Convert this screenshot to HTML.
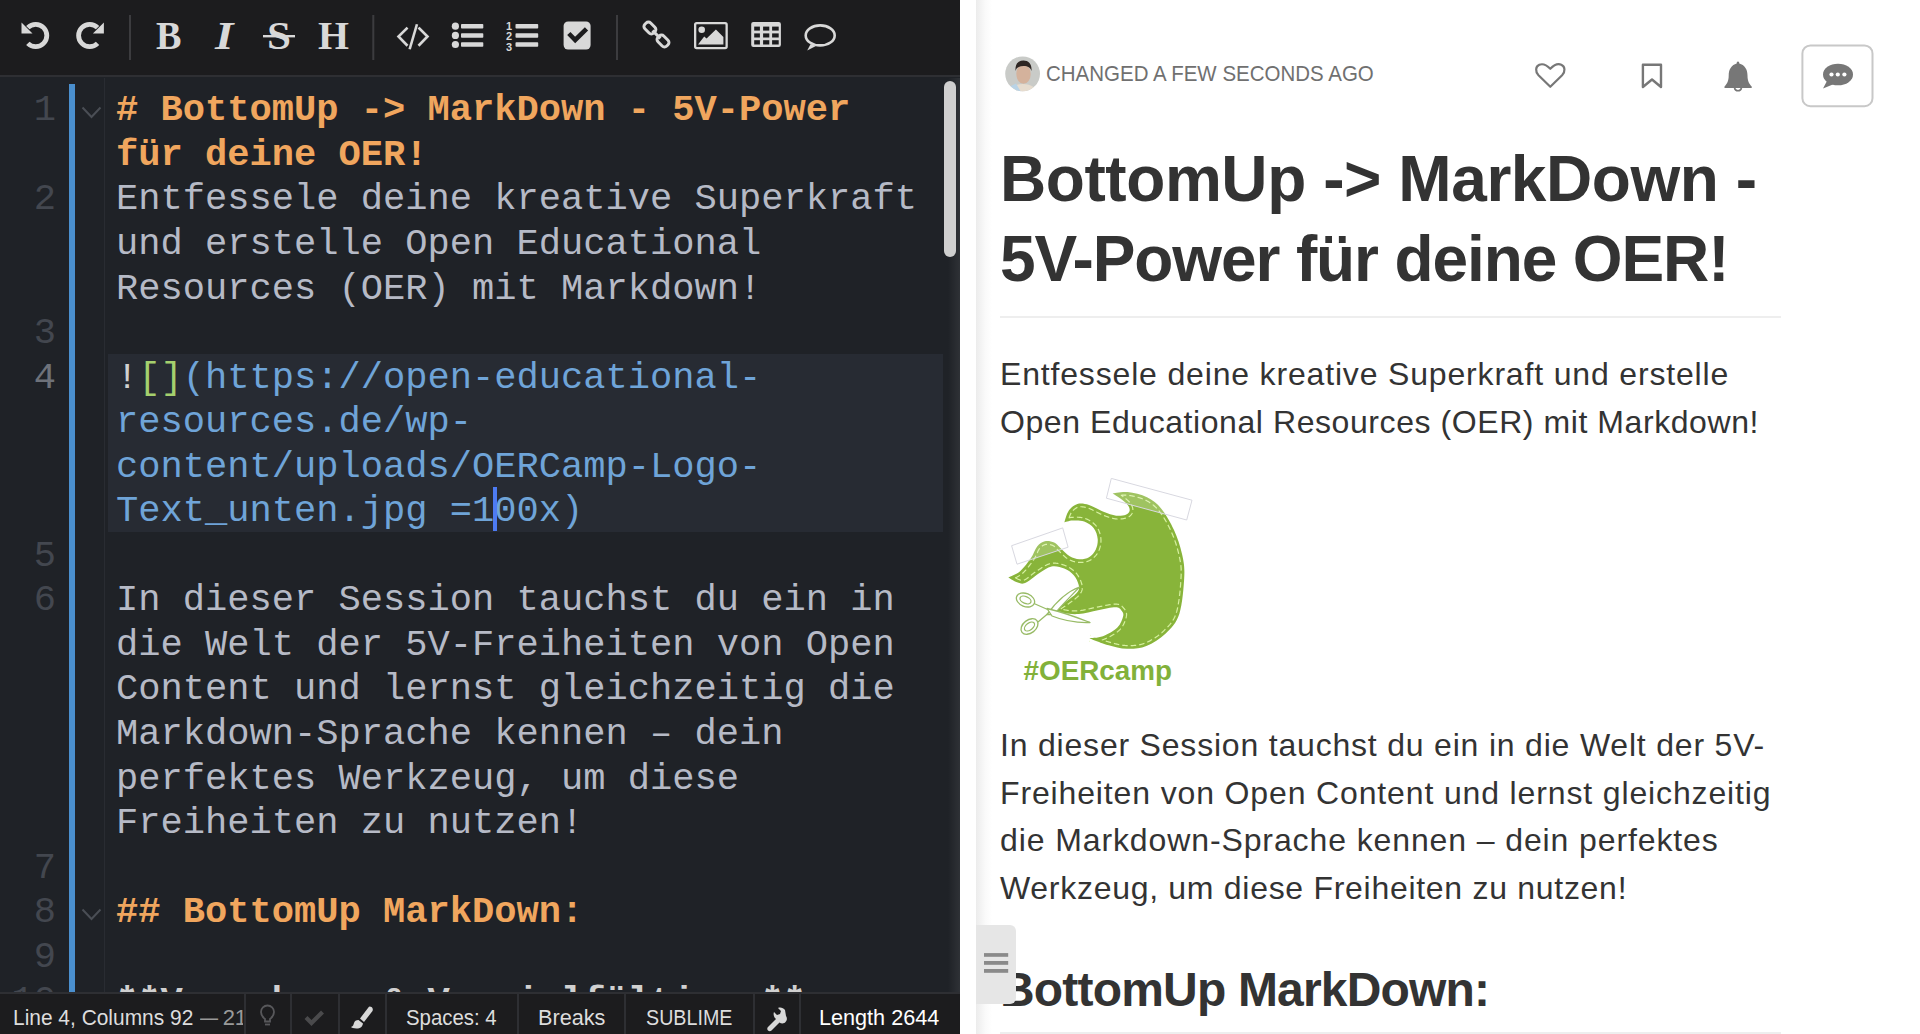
<!DOCTYPE html>
<html><head><meta charset="utf-8">
<style>
*{box-sizing:border-box;margin:0;padding:0}
html,body{width:1920px;height:1034px;overflow:hidden;background:#fff;font-family:"Liberation Sans",sans-serif}
#left{position:absolute;left:0;top:0;width:960px;height:1034px;background:#1f2227;overflow:hidden}
#redge{position:absolute;left:948px;top:78px;width:12px;height:914px;background:linear-gradient(to right,rgba(255,255,255,0),rgba(255,255,255,0.07))}
#toolbar{position:absolute;left:0;top:0;width:960px;height:77px;background:#1c1c1e;border-bottom:2px solid #2e2f33}
.ic{position:absolute}
.sep{position:absolute;top:15px;width:2px;height:45px;background:#3a3a3d}
#gutterline{position:absolute;left:104px;top:78px;width:1px;height:914px;background:#292c32}
#bluebar{position:absolute;left:69px;top:84px;width:6px;height:910px;background:#4a8fce}
.ln{position:absolute;left:0;padding-top:2px;width:56px;text-align:right;font-family:"Liberation Mono",monospace;font-size:37.1px;color:#43474f;line-height:44.55px;height:44.55px}
.row{position:absolute;left:116px;padding-top:2px;font-family:"Liberation Mono",monospace;font-size:37.1px;line-height:44.55px;height:44.55px;white-space:pre;color:#b6bac6}
.h{color:#f0a65e;font-weight:bold}
.u{color:#6fa4d8}
.g{color:#a5d06e}
.w{color:#d0d0d0}
#active{position:absolute;left:108px;top:353.60px;width:835px;height:178.20px;background:#272b33}
.fold{position:absolute;left:81px;width:22px;height:14px}
#cursor{position:absolute;left:493px;top:486.5px;width:3.5px;height:44px;background:#4d7bf3}
#scroll{position:absolute;left:944px;top:81px;width:12px;height:176px;background:#cfcfcf;border-radius:6px}
#status{position:absolute;left:0;top:992px;width:960px;height:42px;background:#1c1c1e;border-top:2px solid #2e2f33;font-family:"Liberation Sans",sans-serif;font-size:22px;color:#ddd}
.sdiv{position:absolute;top:0;width:2px;height:42px;background:#2e2f33}
.st{position:absolute;top:4px;line-height:40px;white-space:pre}
#right{position:absolute;left:960px;top:0;width:960px;height:1034px;background:#fff;overflow:hidden}
#shadow{position:absolute;left:16px;top:0;width:16px;height:1034px;background:linear-gradient(to right,#ececec,#fafafa 60%,#fff)}
.md{position:absolute;left:40px;color:#333;white-space:nowrap}
</style></head><body>
<div id="left">
  <div id="toolbar"></div>
  <svg id="tbsvg" width="960" height="76" style="position:absolute;left:0;top:0">
    <g fill="none" stroke="#d8d8d8" stroke-width="4.8">
      <path d="M27.85 27.65 A11.1 11.1 0 1 1 27.85 43.35"/>
      <path d="M97.55 27.65 A11.1 11.1 0 1 0 97.55 43.35"/>
    </g>
    <g fill="#d8d8d8">
      <polygon points="21.5,22.5 21.5,33.5 32.5,33.5"/>
      <polygon points="103.9,22.5 103.9,33.5 92.9,33.5"/>
    </g>
    <rect x="129" y="15" width="2" height="45" fill="#3c3c3f"/>
    <rect x="372.3" y="15" width="2" height="45" fill="#3c3c3f"/>
    <rect x="616" y="15" width="2" height="45" fill="#3c3c3f"/>
    <g fill="#d8d8d8" font-family="Liberation Serif" font-weight="bold">
      <text id="tB" x="156" y="49" font-size="41" textLength="25.5" lengthAdjust="spacingAndGlyphs">B</text>
      <text id="tI" x="215" y="49" font-size="41" font-style="italic" textLength="18.5" lengthAdjust="spacingAndGlyphs">I</text>
      <text id="tS" x="267" y="49" font-size="41" textLength="24" lengthAdjust="spacingAndGlyphs">S</text>
      <text id="tH" x="318" y="49" font-size="41" textLength="31" lengthAdjust="spacingAndGlyphs">H</text>
    </g>
    <rect x="263" y="35" width="32" height="2.4" fill="#d8d8d8"/>
    <g fill="none" stroke="#d8d8d8" stroke-width="2.6" stroke-linecap="square">
      <polyline points="406.6,28.5 398.5,36.5 406.6,44.8"/>
      <line x1="416.6" y1="25.5" x2="410" y2="48"/>
      <polyline points="419.4,28.5 427.5,36.5 419.4,44.8"/>
    </g>
    <g fill="#d8d8d8">
      <circle cx="455.4" cy="26.2" r="3.6"/><circle cx="455.4" cy="35.4" r="3.6"/><circle cx="455.4" cy="44.5" r="3.6"/>
      <rect x="461" y="24" width="22.3" height="4.5" rx="0.8"/><rect x="461" y="33.2" width="22.3" height="4.5" rx="0.8"/><rect x="461" y="42.3" width="22.3" height="4.5" rx="0.8"/>
      <rect x="515.5" y="24" width="22.7" height="4.5" rx="0.8"/><rect x="515.5" y="33.2" width="22.7" height="4.5" rx="0.8"/><rect x="515.5" y="42.3" width="22.7" height="4.5" rx="0.8"/>
    </g>
    <g fill="#d8d8d8" font-family="Liberation Sans" font-weight="bold" font-size="11">
      <text x="506" y="29.5">1</text><text x="506" y="40">2</text><text x="506" y="50.5">3</text>
    </g>
    <rect x="563.6" y="21.5" width="27" height="28" rx="4.5" fill="#d8d8d8"/>
    <polyline points="568.8,33.5 575.2,40 586.5,28.8" fill="none" stroke="#1c1c1e" stroke-width="4.6"/>
    <g fill="none" stroke="#d8d8d8" stroke-width="3">
      <rect x="-6.2" y="-4.1" width="12.4" height="8.2" rx="3.2" transform="translate(649.9,28) rotate(45)"/>
      <rect x="-6.2" y="-4.1" width="12.4" height="8.2" rx="3.2" transform="translate(663,41) rotate(45)"/>
      <line x1="652.5" y1="30.6" x2="660.4" y2="38.4"/>
    </g>
    <rect x="695.15" y="23.15" width="31.5" height="24.9" rx="1.5" fill="none" stroke="#d8d8d8" stroke-width="2.3"/>
    <circle cx="701.7" cy="29.7" r="3.3" fill="#d8d8d8"/>
    <polygon points="698,44.6 704.2,36.6 706.6,38.5 715.9,29.5 723.4,37 723.4,44.6" fill="#d8d8d8"/>
    <rect x="751.2" y="21.9" width="29.7" height="25" rx="2.2" fill="#d8d8d8"/>
    <g fill="#1c1c1e">
      <rect x="754.2" y="26.6" width="5.7" height="4"/><rect x="763.1" y="26.6" width="6.2" height="4"/><rect x="772.1" y="26.6" width="6.6" height="4"/>
      <rect x="754.2" y="33.4" width="5.7" height="4.1"/><rect x="763.1" y="33.4" width="6.2" height="4.1"/><rect x="772.1" y="33.4" width="6.6" height="4.1"/>
      <rect x="754.2" y="40.2" width="5.7" height="4.3"/><rect x="763.1" y="40.2" width="6.2" height="4.3"/><rect x="772.1" y="40.2" width="6.6" height="4.3"/>
    </g>
    <path d="M810.5 44.3 L807.2 50.6 L816.5 45.8" fill="#d8d8d8"/>
    <ellipse cx="820.2" cy="35.4" rx="14.5" ry="10" fill="none" stroke="#d8d8d8" stroke-width="2.6"/>
  </svg>
  <div id="gutterline"></div>
  <div id="active"></div>
  <div id="bluebar"></div>
<!--ROWS-->
  <div class="ln" style="top:86.30px">1</div>
  <div class="row" style="top:86.30px"><span class="h"># BottomUp -&gt; MarkDown - 5V-Power</span></div>
  <div class="row" style="top:130.85px"><span class="h">für deine OER!</span></div>
  <div class="ln" style="top:175.40px">2</div>
  <div class="row" style="top:175.40px">Entfessele deine kreative Superkraft</div>
  <div class="row" style="top:219.95px">und erstelle Open Educational</div>
  <div class="row" style="top:264.50px">Resources (OER) mit Markdown!</div>
  <div class="ln" style="top:309.05px">3</div>
  <div class="ln" style="top:353.60px;color:#6e727a">4</div>
  <div class="row" style="top:353.60px"><span class="w">!</span><span class="g">[]</span><span class="u">(https://open-educational-</span></div>
  <div class="row" style="top:398.15px"><span class="u">resources.de/wp-</span></div>
  <div class="row" style="top:442.70px"><span class="u">content/uploads/OERCamp-Logo-</span></div>
  <div class="row" style="top:487.25px"><span class="u">Text_unten.jpg =100x)</span></div>
  <div class="ln" style="top:531.80px">5</div>
  <div class="ln" style="top:576.35px">6</div>
  <div class="row" style="top:576.35px">In dieser Session tauchst du ein in</div>
  <div class="row" style="top:620.90px">die Welt der 5V-Freiheiten von Open</div>
  <div class="row" style="top:665.45px">Content und lernst gleichzeitig die</div>
  <div class="row" style="top:710.00px">Markdown-Sprache kennen – dein</div>
  <div class="row" style="top:754.55px">perfektes Werkzeug, um diese</div>
  <div class="row" style="top:799.10px">Freiheiten zu nutzen!</div>
  <div class="ln" style="top:843.65px">7</div>
  <div class="ln" style="top:888.20px">8</div>
  <div class="row" style="top:888.20px"><span class="h">## BottomUp MarkDown:</span></div>
  <div class="ln" style="top:932.75px">9</div>
  <div class="ln" style="top:977.30px">10</div>
  <div class="row" style="top:977.30px"><span class="w" style="font-weight:bold;position:relative;top:1px">**Verwahren &amp; Vervielfältigen**</span></div>
  <svg class="fold" style="top:106.30px" width="22" height="14"><polyline points="1.5,1.5 10.5,11 19.5,1.5" fill="none" stroke="#4a4e55" stroke-width="2"/></svg>
  <svg class="fold" style="top:908.20px" width="22" height="14"><polyline points="1.5,1.5 10.5,11 19.5,1.5" fill="none" stroke="#4a4e55" stroke-width="2"/></svg>
<!--/ROWS-->
  <div id="redge"></div>
  <div id="cursor"></div>
  <div id="scroll"></div>
  <div id="status">
    <div class="st" style="left:13px;width:230px;overflow:hidden"><span id="s1" style="display:inline-block;transform:scaleX(0.951);transform-origin:0 0;width:180.5px">Line 4, Columns 92</span> <span style="color:#9a9a9a;display:inline-block;transform:scaleX(0.82);transform-origin:left">—</span><span style="color:#9a9a9a;margin-left:1px">21</span></div>
    <div class="sdiv" style="left:243.5px"></div>
    <div class="sdiv" style="left:290px"></div>
    <div class="sdiv" style="left:337.5px"></div>
    <div class="sdiv" style="left:384.5px"></div>
    <div class="sdiv" style="left:517px"></div>
    <div class="sdiv" style="left:623.5px"></div>
    <div class="sdiv" style="left:753px"></div>
    <div class="sdiv" style="left:799px"></div>
    <svg width="960" height="42" style="position:absolute;left:0;top:-2px">
      <g fill="none" stroke="#58585b" stroke-width="1.8" transform="translate(0,-992)">
        <path d="M265 1021.5 v-2.5 c-2.6-2-4-4-4-7 a6.5 6.5 0 0 1 13 0 c0 3-1.4 5-4 7 v2.5z"/>
        <path d="M265 1024.5 h5"/>
      </g>
      <polyline points="306,1017.5 311.5,1023 322.5,1012" transform="translate(0,-992)" fill="none" stroke="#4a4a4c" stroke-width="4.2"/>
      <g transform="translate(0,-992)" fill="#d8d8d8">
        <path d="M369.5 1006.5 c2.5 0 4 2 3 4.5 l-8.5 11 l-4-3.5 l8-10.5 c0.5-1 1-1.5 1.5-1.5z"/>
        <path d="M358.5 1020 l4.5 3.5 c-0.5 3-2.5 5-6.5 5 c-3 0-5-1-5.5-1.5 c2.5-1 2.5-2.5 3-4 c0.5-2 2-3 4.5-3z"/>
      </g>
      <path transform="translate(0,-992)" d="M785 1010 c-1.5-2-4.5-3-7-2 l3 3 l-1 3 l-3 1 l-3-3 c-1 2.5 0 5.5 2 7 l-8 8 c-1 1-1 2.5 0 3.5 s2.5 1 3.5 0 l8-8 c1.5 1 4.5 1.5 6-0.5 c1.5-1.5 2-4 0.5-6z" fill="#d8d8d8"/>
    </svg>
    <div class="st" id="s2" style="left:406px;transform:scaleX(0.927);transform-origin:0 0">Spaces: 4</div>
    <div class="st" id="s3" style="left:537.5px;transform:scaleX(0.985);transform-origin:0 0">Breaks</div>
    <div class="st" id="s4" style="left:646px;transform:scaleX(0.895);transform-origin:0 0">SUBLIME</div>
    <div class="st" id="s5" style="left:819px;transform:scaleX(0.983);transform-origin:0 0;color:#fff">Length 2644</div>
  </div>
</div>
<div id="right">
  <div id="shadow"></div>
  <svg style="position:absolute;left:45px;top:56px" width="36" height="36" viewBox="0 0 36 36">
    <defs><clipPath id="avc"><circle cx="17.6" cy="17.8" r="17.4"/></clipPath></defs>
    <g clip-path="url(#avc)">
      <rect width="36" height="36" fill="#c9cbc8"/>
      <ellipse cx="18" cy="38" rx="15" ry="10" fill="#e6dccf"/>
      <path d="M4 31 L11 27.5 L16 36 L2 36z" fill="#b9d3e6"/>
      <ellipse cx="18.5" cy="18" rx="7.2" ry="9.8" fill="#d4b29c"/>
      <path d="M10.5 15 C10 7.5 13.5 4.5 18.5 4.5 C23.5 4.5 27 7.5 26.5 15 C25.5 11.5 23 10 18.5 10 C14 10 11.5 11.5 10.5 15z" fill="#2e2623"/>
    </g>
  </svg>
  <div class="md" id="changed" style="left:86px;top:56px;font-size:22px;line-height:36px;color:#707070;transform:scaleX(0.931);transform-origin:0 0">CHANGED A FEW SECONDS AGO</div>
  <svg style="position:absolute;left:0;top:0" width="960" height="120">
    <path d="M590.3 86.8 L578.5 75.2 C575 71.5 575.5 66.5 579.3 64.8 C582.5 63.4 586.2 64.6 590.3 68.8 C594.4 64.6 598.1 63.4 601.3 64.8 C605.1 66.5 605.6 71.5 602.1 75.2 Z" fill="none" stroke="#777" stroke-width="2.2" stroke-linejoin="round"/>
    <path d="M682.9 64.8 H701 V87 L692 79.5 L682.9 87 Z" fill="none" stroke="#777" stroke-width="2.4" stroke-linejoin="round"/>
    <path d="M778 61.5 C779 61.5 779.3 62.3 779.3 63.5 C784.5 65 787.5 69 787.5 75.5 C787.5 81 789 83.5 791.7 86.5 L791.7 88 H764.5 V86.5 C767.2 83.5 768.7 81 768.7 75.5 C768.7 69 771.7 65 776.7 63.5 C776.7 62.3 777 61.5 778 61.5Z" fill="#777"/>
    <path d="M774.5 88 A3.6 3.6 0 0 0 781.5 88" fill="none" stroke="#777" stroke-width="1.6"/>
    <rect x="842.4" y="45.4" width="70.1" height="60.8" rx="8" fill="none" stroke="#c8c8c8" stroke-width="2"/>
    <ellipse cx="878" cy="74.5" rx="15" ry="10.8" fill="#777"/>
    <path d="M867 81 L863 88.5 L874 84z" fill="#777"/>
    <circle cx="871.5" cy="74.5" r="2.1" fill="#fff"/><circle cx="877.8" cy="74.5" r="2.1" fill="#fff"/><circle cx="884.4" cy="74.5" r="2.1" fill="#fff"/>
  </svg>
  <div class="md" id="h1a" style="letter-spacing:-0.43px;top:139.3px;font-size:64px;line-height:80px;font-weight:bold">BottomUp -&gt; MarkDown -</div>
  <div class="md" id="h1b" style="letter-spacing:-1.11px;top:219.3px;font-size:64px;line-height:80px;font-weight:bold">5V-Power für deine OER!</div>
  <div style="position:absolute;left:40px;top:316px;width:781px;height:2px;background:#eeeeee"></div>
  <div class="md" id="p1a" style="letter-spacing:0.83px;top:349.8px;font-size:32px;line-height:48px">Entfessele deine kreative Superkraft und erstelle</div>
  <div class="md" id="p1b" style="letter-spacing:0.57px;top:397.8px;font-size:32px;line-height:48px">Open Educational Resources (OER) mit Markdown!</div>
  <!--LOGO-->
  <svg style="position:absolute;left:40px;top:478px" width="200" height="212" viewBox="0 2 200 212">
    <path d="M112.69 17.40 C112.69 17.40 121.99 15.36 127.71 16.01 C133.43 16.66 141.36 18.49 147.00 21.30 C152.63 24.12 156.98 27.41 161.50 32.89 C166.02 38.38 170.70 46.78 174.10 54.20 C177.50 61.61 180.19 69.77 181.89 77.40 C183.59 85.03 184.73 89.90 184.30 100.00 C183.87 110.10 182.40 128.44 179.30 138.00 C176.20 147.57 171.18 152.07 165.70 157.40 C160.21 162.73 152.84 167.43 146.39 170.00 C139.94 172.57 133.45 172.97 127.00 172.80 C120.55 172.63 113.98 170.76 107.69 168.99 C101.41 167.23 89.30 162.20 89.30 162.20 C89.30 162.20 98.21 162.06 102.89 160.29 C107.58 158.53 114.01 154.98 117.40 151.59 C120.78 148.21 122.57 142.90 123.20 140.00 C123.84 137.10 122.51 135.64 121.21 134.20 C119.91 132.75 119.27 131.30 115.40 131.30 C111.54 131.30 104.12 133.08 98.00 134.20 C91.89 135.31 84.33 137.54 78.70 138.00 C73.07 138.47 68.23 137.80 64.20 137.00 C60.16 136.20 54.49 133.20 54.49 133.20 C54.49 133.20 65.13 126.40 68.99 123.50 C72.86 120.60 76.08 118.21 77.69 115.79 C79.31 113.37 79.35 111.74 78.70 108.99 C78.05 106.25 76.21 102.04 73.79 99.30 C71.38 96.57 67.89 94.05 64.20 92.60 C60.50 91.15 55.84 89.78 51.59 90.60 C47.35 91.42 43.43 94.69 38.70 97.52 C33.97 100.35 28.25 106.94 23.22 107.59 C18.19 108.23 8.51 101.39 8.51 101.39 C8.51 101.39 16.38 98.43 20.12 95.20 C23.86 91.98 28.12 86.17 30.96 82.04 C33.80 77.92 34.83 73.22 37.15 70.43 C39.47 67.65 42.05 65.97 44.89 65.33 C47.73 64.68 51.60 65.45 54.18 66.56 C56.76 67.67 57.78 69.69 60.37 71.98 C62.96 74.27 66.55 78.42 69.71 80.29 C72.86 82.16 76.09 83.05 79.30 83.20 C82.52 83.36 86.26 82.83 89.01 81.21 C91.76 79.59 94.36 76.55 95.80 73.50 C97.25 70.45 98.03 66.44 97.69 62.89 C97.36 59.34 96.06 55.10 93.81 52.20 C91.56 49.30 87.73 46.78 84.20 45.50 C80.66 44.21 75.90 44.36 72.60 44.50 C69.30 44.65 64.40 46.39 64.40 46.39 C64.40 46.39 66.53 37.86 68.70 34.80 C70.87 31.73 74.01 28.97 77.40 28.00 C80.78 27.04 84.66 27.69 89.01 28.99 C93.36 30.29 98.98 34.02 103.50 35.80 C108.01 37.59 112.38 39.22 116.10 39.71 C119.82 40.19 123.56 39.52 125.80 38.70 C128.05 37.88 129.28 36.42 129.60 34.80 C129.91 33.18 129.31 31.09 127.71 28.99 C126.11 26.89 122.50 24.13 120.00 22.20 C117.50 20.27 112.69 17.40 112.69 17.40Z" fill="#88b43a"/>
    <path d="M120.78 19.34 L121.26 19.29 L121.73 19.25 L122.20 19.21 L122.67 19.17 L123.14 19.14 L123.61 19.12 L124.07 19.10 L124.52 19.09 L124.96 19.08 L125.40 19.08 L125.82 19.09 L126.23 19.10 L126.62 19.12 L126.99 19.15 L127.36 19.19 L127.76 19.23 L128.17 19.29 L128.60 19.34 L129.03 19.40 L129.47 19.47 L129.91 19.54 L130.37 19.61 L130.82 19.69 L131.29 19.77 L131.75 19.86 L132.22 19.95 L132.70 20.04 L133.18 20.14 L133.66 20.24 L134.14 20.35 L134.63 20.46 L135.11 20.57 L135.60 20.69 L136.09 20.81 L136.57 20.94 L137.06 21.07 L137.55 21.20 L138.03 21.34 L138.51 21.48 L138.99 21.62 L139.47 21.77 L139.94 21.92 L140.41 22.07 L140.88 22.23 L141.34 22.39 L141.79 22.56 L142.24 22.72 L142.69 22.89 L143.12 23.07 L143.55 23.24 L143.97 23.42 L144.38 23.60 L144.79 23.79 L145.18 23.97 L145.57 24.17 L145.96 24.36 L146.35 24.56 L146.74 24.77 L147.12 24.97 L147.50 25.18 L147.87 25.39 L148.24 25.60 L148.60 25.81 L148.96 26.03 L149.31 26.25 L149.66 26.47 L150.01 26.69 L150.36 26.92 L150.70 27.15 L151.03 27.38 L151.37 27.62 L151.70 27.86 L152.03 28.11 L152.36 28.35 L152.68 28.61 L153.01 28.87 L153.33 29.13 L153.65 29.40 L153.97 29.67 L154.29 29.95 L154.60 30.24 L154.92 30.53 L155.24 30.82 L155.55 31.13 L155.87 31.44 L156.18 31.75 L156.50 32.08 L156.81 32.41 L157.13 32.74 L157.44 33.09 L157.76 33.44 L158.07 33.80 L158.39 34.17 L158.71 34.54 L159.03 34.93 L159.35 35.32 L159.66 35.72 L159.98 36.13 L160.30 36.55 L160.63 36.98 L160.95 37.42 L161.27 37.87 L161.60 38.33 L161.92 38.80 L162.24 39.28 L162.57 39.77 L162.89 40.26 L163.22 40.76 L163.54 41.27 L163.86 41.78 L164.18 42.30 L164.50 42.82 L164.82 43.35 L165.14 43.89 L165.46 44.43 L165.77 44.97 L166.08 45.52 L166.39 46.07 L166.70 46.62 L167.01 47.18 L167.31 47.73 L167.61 48.29 L167.91 48.85 L168.20 49.41 L168.49 49.97 L168.78 50.54 L169.06 51.10 L169.34 51.66 L169.62 52.22 L169.89 52.77 L170.16 53.33 L170.43 53.88 L170.69 54.44 L170.94 54.98 L171.19 55.53 L171.44 56.07 L171.68 56.61 L171.92 57.16 L172.16 57.71 L172.40 58.26 L172.63 58.81 L172.86 59.37 L173.09 59.92 L173.31 60.48 L173.53 61.05 L173.75 61.61 L173.97 62.17 L174.18 62.74 L174.39 63.31 L174.60 63.87 L174.81 64.44 L175.01 65.01 L175.21 65.59 L175.40 66.16 L175.60 66.73 L175.79 67.30 L175.97 67.88 L176.16 68.45 L176.34 69.02 L176.51 69.60 L176.69 70.17 L176.86 70.74 L177.03 71.31 L177.19 71.88 L177.35 72.45 L177.51 73.02 L177.66 73.59 L177.81 74.16 L177.96 74.73 L178.10 75.29 L178.24 75.86 L178.38 76.42 L178.51 76.98 L178.64 77.54 L178.77 78.10 L178.89 78.66 L179.02 79.22 L179.14 79.77 L179.26 80.30 L179.37 80.83 L179.49 81.35 L179.60 81.86 L179.70 82.37 L179.81 82.87 L179.91 83.36 L180.00 83.85 L180.10 84.34 L180.19 84.82 L180.28 85.30 L180.36 85.78 L180.44 86.26 L180.52 86.74 L180.59 87.22 L180.66 87.70 L180.72 88.19 L180.78 88.68 L180.84 89.17 L180.89 89.67 L180.94 90.17 L180.99 90.69 L181.03 91.21 L181.07 91.74 L181.10 92.28 L181.13 92.83 L181.15 93.40 L181.17 93.97 L181.18 94.56 L181.19 95.17 L181.19 95.79 L181.19 96.42 L181.19 97.07 L181.17 97.74 L181.16 98.43 L181.13 99.14 L181.11 99.87 L181.07 100.63 L181.03 101.42 L180.99 102.24 L180.95 103.08 L180.90 103.95 L180.84 104.85 L180.79 105.76 L180.72 106.69 L180.66 107.65 L180.59 108.61 L180.51 109.60 L180.43 110.59 L180.35 111.60 L180.26 112.62 L180.16 113.64 L180.07 114.68 L179.96 115.71 L179.86 116.75 L179.74 117.80 L179.63 118.84 L179.50 119.88 L179.38 120.91 L179.25 121.94 L179.11 122.97 L178.97 123.99 L178.82 124.99 L178.67 125.99 L178.51 126.97 L178.35 127.93 L178.18 128.88 L178.01 129.81 L177.83 130.72 L177.65 131.61 L177.47 132.47 L177.28 133.31 L177.08 134.11 L176.88 134.89 L176.68 135.63 L176.47 136.34 L176.26 137.02 L176.04 137.67 L175.82 138.31 L175.58 138.93 L175.35 139.53 L175.11 140.12 L174.86 140.68 L174.61 141.24 L174.35 141.77 L174.09 142.30 L173.82 142.81 L173.55 143.30 L173.27 143.79 L172.99 144.26 L172.70 144.73 L172.41 145.18 L172.11 145.62 L171.81 146.06 L171.50 146.49 L171.19 146.91 L170.87 147.32 L170.55 147.73 L170.22 148.13 L169.89 148.53 L169.55 148.92 L169.20 149.31 L168.86 149.70 L168.50 150.08 L168.14 150.47 L167.78 150.85 L167.41 151.23 L167.04 151.61 L166.66 151.99 L166.27 152.37 L165.89 152.75 L165.49 153.14 L165.10 153.52 L164.69 153.91 L164.29 154.31 L163.88 154.70 L163.47 155.10 L163.08 155.48 L162.68 155.85 L162.28 156.22 L161.87 156.59 L161.45 156.95 L161.03 157.32 L160.61 157.68 L160.17 158.04 L159.74 158.39 L159.29 158.74 L158.85 159.09 L158.40 159.44 L157.94 159.78 L157.48 160.12 L157.02 160.45 L156.55 160.78 L156.08 161.10 L155.61 161.42 L155.14 161.74 L154.67 162.05 L154.19 162.36 L153.71 162.66 L153.23 162.96 L152.75 163.25 L152.27 163.53 L151.79 163.81 L151.31 164.08 L150.83 164.35 L150.35 164.61 L149.87 164.87 L149.39 165.11 L148.92 165.35 L148.44 165.59 L147.97 165.82 L147.50 166.04 L147.04 166.25 L146.57 166.46 L146.12 166.65 L145.66 166.84 L145.21 167.03 L144.77 167.20 L144.33 167.36 L143.89 167.52 L143.45 167.67 L143.00 167.81 L142.56 167.95 L142.12 168.08 L141.68 168.21 L141.23 168.32 L140.79 168.44 L140.34 168.54 L139.90 168.64 L139.45 168.74 L139.00 168.83 L138.55 168.91 L138.11 168.99 L137.66 169.06 L137.21 169.13 L136.75 169.19 L136.30 169.25 L135.85 169.30 L135.40 169.35 L134.94 169.40 L134.49 169.44 L134.03 169.47 L133.57 169.51 L133.11 169.54 L132.65 169.56 L132.19 169.58 L131.73 169.60 L131.27 169.61 L130.81 169.62 L130.35 169.63 L129.88 169.63 L129.42 169.63 L128.95 169.63 L128.49 169.63 L128.02 169.62 L127.55 169.61 L127.09 169.60 L126.64 169.59 L126.19 169.57 L125.75 169.54 L125.30 169.51 L124.85 169.47 L124.40 169.43 L123.95 169.39 L123.50 169.33 L123.04 169.28 L122.59 169.22 L122.13 169.15 L121.67 169.08 L121.21 169.00 L120.75 168.92 L120.29 168.84 L119.83 168.76 L119.36 168.66 L118.90 168.57 L118.43 168.47 L117.97 168.37 L117.50 168.27 L117.03 168.16 L116.57 168.05 L116.10 167.94 L115.63 167.82 L115.16 167.71 L114.69 167.59 L114.22 167.47 L113.75 167.34 L113.28 167.22 L112.81 167.09 L112.33 166.96 L111.86 166.84 L111.39 166.71 L110.92 166.57 L110.45 166.44 L109.98 166.31 L109.50 166.18 L109.03 166.05 L108.57 165.92 L108.11 165.78 L107.64 165.64 L107.15 165.49 L106.63 165.33 L106.10 165.15 L105.55 164.97 L104.99 164.78 L104.42 164.59 L103.84 164.38 L103.24 164.17 L102.65 163.96 L102.05 163.74 M90.87 159.38 L90.72 159.32 L90.61 159.28 L90.55 159.25 M89.38 165.40 L89.43 165.40 L89.52 165.39 L89.64 165.39 L89.79 165.39 M101.74 163.99 L102.21 163.87 L102.67 163.74 L103.13 163.60 L103.58 163.45 L104.01 163.29 L104.41 163.14 L104.80 162.99 L105.19 162.83 L105.59 162.66 L105.99 162.49 L106.40 162.31 L106.81 162.13 L107.22 161.94 L107.63 161.75 L108.05 161.55 L108.47 161.34 L108.89 161.13 L109.31 160.92 L109.73 160.70 L110.15 160.48 L110.57 160.26 L110.99 160.03 L111.41 159.79 L111.83 159.55 L112.25 159.31 L112.66 159.07 L113.08 158.82 L113.49 158.57 L113.89 158.31 L114.30 158.05 L114.69 157.79 L115.09 157.53 L115.48 157.26 L115.86 156.99 L116.24 156.72 L116.62 156.45 L116.98 156.17 L117.34 155.89 L117.70 155.61 L118.05 155.33 L118.38 155.04 L118.72 154.75 L119.04 154.45 L119.35 154.16 L119.66 153.86 L119.97 153.54 L120.27 153.22 L120.56 152.89 L120.84 152.56 L121.11 152.22 L121.37 151.88 L121.62 151.54 L121.87 151.19 L122.11 150.84 L122.34 150.49 L122.56 150.14 L122.78 149.78 L122.98 149.42 L123.19 149.07 L123.38 148.71 L123.57 148.35 L123.75 147.99 L123.92 147.64 L124.09 147.28 L124.25 146.93 L124.41 146.57 L124.56 146.22 L124.70 145.88 L124.84 145.53 L124.97 145.19 L125.10 144.85 L125.22 144.52 L125.34 144.19 L125.45 143.86 L125.55 143.54 L125.65 143.23 L125.75 142.92 L125.84 142.62 L125.92 142.32 L126.00 142.03 L126.08 141.74 L126.15 141.47 L126.21 141.20 L126.27 140.94 L126.33 140.67 L126.39 140.38 L126.44 140.08 L126.49 139.79 L126.52 139.49 L126.55 139.20 L126.56 138.90 L126.57 138.61 L126.56 138.33 L126.55 138.04 L126.53 137.76 L126.50 137.48 L126.45 137.21 L126.40 136.94 L126.35 136.68 L126.28 136.42 L126.20 136.17 L126.12 135.92 L126.03 135.68 L125.94 135.45 L125.84 135.22 L125.74 135.00 L125.63 134.79 L125.52 134.59 L125.40 134.39 L125.29 134.20 L125.17 134.02 L125.05 133.84 L124.93 133.67 L124.81 133.51 L124.69 133.35 L124.57 133.20 L124.45 133.05 L124.34 132.91 L124.22 132.78 L124.11 132.65 L124.00 132.52 L123.89 132.40 L123.79 132.28 L123.69 132.17 L123.60 132.07 L123.52 131.98 L123.44 131.89 L123.36 131.80 L123.28 131.70 L123.19 131.60 L123.10 131.49 L123.01 131.37 L122.91 131.25 L122.80 131.13 L122.68 131.00 L122.56 130.86 L122.43 130.72 L122.29 130.58 L122.14 130.44 L121.99 130.29 L121.82 130.14 L121.64 129.99 L121.46 129.84 L121.26 129.69 L121.05 129.55 L120.84 129.41 L120.61 129.27 L120.38 129.15 L120.14 129.02 L119.89 128.91 L119.63 128.80 L119.37 128.70 L119.10 128.61 L118.82 128.52 L118.54 128.45 L118.26 128.38 L117.96 128.32 L117.67 128.27 L117.36 128.22 L117.05 128.18 L116.74 128.15 L116.42 128.13 L116.09 128.11 L115.75 128.10 L115.40 128.10 L115.04 128.10 L114.67 128.12 L114.29 128.13 L113.91 128.16 L113.52 128.19 L113.12 128.23 L112.72 128.27 L112.31 128.32 L111.90 128.37 L111.48 128.43 L111.05 128.49 L110.61 128.55 L110.17 128.62 L109.73 128.69 L109.28 128.77 L108.82 128.84 L108.36 128.93 L107.90 129.01 L107.43 129.10 L106.95 129.18 L106.48 129.27 L106.00 129.37 L105.52 129.46 L105.04 129.55 L104.56 129.65 L104.07 129.75 L103.59 129.84 L103.10 129.94 L102.61 130.04 L102.13 130.13 L101.65 130.23 L101.17 130.33 L100.69 130.42 L100.21 130.52 L99.73 130.61 L99.26 130.70 L98.80 130.79 L98.34 130.88 L97.88 130.96 L97.42 131.05 L96.95 131.14 L96.46 131.23 L95.97 131.33 L95.48 131.43 L94.99 131.53 L94.50 131.63 L94.00 131.74 L93.50 131.85 L93.00 131.96 L92.50 132.07 L91.99 132.19 L91.49 132.30 L90.98 132.42 L90.48 132.53 L89.98 132.65 L89.47 132.76 L88.97 132.88 L88.47 132.99 L87.97 133.11 L87.47 133.22 L86.97 133.33 L86.48 133.44 L85.99 133.55 L85.50 133.65 L85.02 133.76 L84.53 133.86 L84.06 133.95 L83.59 134.04 L83.12 134.13 L82.66 134.22 L82.20 134.30 L81.75 134.38 L81.31 134.45 L80.87 134.52 L80.45 134.58 L80.03 134.64 L79.61 134.69 L79.21 134.74 L78.82 134.78 L78.43 134.81 L78.04 134.84 L77.66 134.87 L77.27 134.89 L76.89 134.91 L76.51 134.93 L76.13 134.94 L75.76 134.95 L75.38 134.95 L75.01 134.96 L74.65 134.96 L74.28 134.95 L73.92 134.94 L73.56 134.93 L73.21 134.92 L72.85 134.90 L72.50 134.89 L72.15 134.87 L71.81 134.84 L71.47 134.82 L71.12 134.79 L70.79 134.76 L70.45 134.72 L70.12 134.69 L69.79 134.65 L69.46 134.61 L69.13 134.57 L68.81 134.53 L68.49 134.49 L68.17 134.44 L67.85 134.39 L67.54 134.34 L67.23 134.30 L66.92 134.24 L66.61 134.19 L66.31 134.14 L66.00 134.08 L65.70 134.03 L65.41 133.97 L65.11 133.92 L64.83 133.86 L64.58 133.81 L64.33 133.75 L64.07 133.68 L63.80 133.61 L63.52 133.53 L63.23 133.45 L62.94 133.36 L62.65 133.26 L62.35 133.16 L62.05 133.05 L61.75 132.94 L61.45 132.83 L61.15 132.72 L60.85 132.60 M60.67 133.02 L61.12 132.72 L61.58 132.42 L62.05 132.11 L62.53 131.80 L63.01 131.48 L63.50 131.16 L63.99 130.84 L64.48 130.51 L64.97 130.18 L65.46 129.86 L65.94 129.53 L66.42 129.21 L66.89 128.89 L67.36 128.57 L67.81 128.26 L68.25 127.96 L68.68 127.66 L69.10 127.37 L69.50 127.09 L69.88 126.81 L70.24 126.55 L70.59 126.30 L70.91 126.06 L71.20 125.84 L71.49 125.63 L71.78 125.41 L72.06 125.20 L72.34 124.99 L72.62 124.78 L72.89 124.57 L73.17 124.36 L73.44 124.15 L73.71 123.95 L73.98 123.74 L74.24 123.53 L74.50 123.33 L74.76 123.12 L75.02 122.92 L75.27 122.72 L75.52 122.51 L75.77 122.31 L76.01 122.11 L76.26 121.90 L76.50 121.70 L76.73 121.50 L76.96 121.29 L77.19 121.08 L77.42 120.88 L77.64 120.67 L77.86 120.46 L78.08 120.25 L78.29 120.04 L78.50 119.83 L78.70 119.62 L78.90 119.40 L79.10 119.18 L79.29 118.96 L79.48 118.74 L79.66 118.51 L79.84 118.28 L80.02 118.05 L80.19 117.81 L80.35 117.57 L80.50 117.35 L80.64 117.13 L80.78 116.90 L80.91 116.68 L81.03 116.46 L81.15 116.23 L81.27 116.01 L81.38 115.78 L81.48 115.55 L81.58 115.31 L81.68 115.08 L81.76 114.84 L81.84 114.61 L81.92 114.37 L81.99 114.13 L82.05 113.88 L82.10 113.64 L82.15 113.40 L82.19 113.15 L82.22 112.91 L82.25 112.67 L82.27 112.42 L82.28 112.18 L82.29 111.94 L82.29 111.70 L82.29 111.46 L82.28 111.23 L82.27 110.99 L82.25 110.76 L82.23 110.53 L82.20 110.30 L82.17 110.07 L82.13 109.84 L82.10 109.62 L82.06 109.39 L82.01 109.17 L81.97 108.94 L81.92 108.71 L81.87 108.49 L81.81 108.25 L81.75 108.00 L81.69 107.75 L81.62 107.49 L81.54 107.23 L81.46 106.96 L81.38 106.70 L81.29 106.43 L81.20 106.16 L81.10 105.88 L81.00 105.60 L80.90 105.33 L80.79 105.04 L80.68 104.76 L80.56 104.48 L80.44 104.19 L80.32 103.90 L80.19 103.61 L80.06 103.33 L79.93 103.04 L79.79 102.75 L79.64 102.46 L79.50 102.16 L79.35 101.87 L79.19 101.58 L79.04 101.30 L78.87 101.01 L78.71 100.72 L78.54 100.43 L78.37 100.15 L78.19 99.87 L78.01 99.59 L77.82 99.31 L77.63 99.03 L77.44 98.76 L77.24 98.49 L77.04 98.22 L76.83 97.95 L76.62 97.69 L76.41 97.44 L76.19 97.19 L75.98 96.95 L75.76 96.71 L75.55 96.48 L75.32 96.25 L75.10 96.03 L74.87 95.80 L74.64 95.58 L74.40 95.35 L74.16 95.13 L73.92 94.91 L73.67 94.70 L73.42 94.48 L73.17 94.27 L72.91 94.06 L72.66 93.86 L72.39 93.65 L72.13 93.45 L71.86 93.25 L71.59 93.05 L71.32 92.86 L71.04 92.66 L70.76 92.47 L70.48 92.29 L70.20 92.10 L69.91 91.92 L69.63 91.75 L69.34 91.57 L69.04 91.40 L68.75 91.23 L68.45 91.07 L68.15 90.91 L67.85 90.75 L67.54 90.59 L67.24 90.44 L66.93 90.30 L66.62 90.15 L66.31 90.01 L65.99 89.88 L65.68 89.75 L65.37 89.62 L65.07 89.51 L64.77 89.39 L64.46 89.28 L64.15 89.16 L63.84 89.05 L63.52 88.94 L63.20 88.83 L62.88 88.72 L62.55 88.61 L62.22 88.51 L61.88 88.40 L61.54 88.30 L61.20 88.20 L60.85 88.11 L60.50 88.02 L60.15 87.93 L59.80 87.84 L59.44 87.76 L59.08 87.68 L58.71 87.61 L58.35 87.54 L57.98 87.48 L57.61 87.42 L57.23 87.36 L56.85 87.32 L56.48 87.27 L56.09 87.24 L55.71 87.21 L55.33 87.18 L54.94 87.17 L54.55 87.16 L54.16 87.16 L53.77 87.16 L53.37 87.18 L52.98 87.20 L52.58 87.24 L52.18 87.28 L51.79 87.33 L51.39 87.39 L50.99 87.46 L50.58 87.55 L50.18 87.64 L49.79 87.75 L49.39 87.86 L49.01 87.98 L48.63 88.11 L48.25 88.25 L47.88 88.40 L47.51 88.55 L47.14 88.71 L46.78 88.88 L46.42 89.05 L46.07 89.23 L45.72 89.41 L45.37 89.59 L45.03 89.78 L44.68 89.97 L44.34 90.17 L44.01 90.37 L43.67 90.57 L43.33 90.78 L43.00 90.98 L42.67 91.19 L42.34 91.40 L42.01 91.61 L41.68 91.83 L41.35 92.04 L41.02 92.26 L40.69 92.47 L40.36 92.68 L40.03 92.90 L39.71 93.11 L39.38 93.32 L39.05 93.54 L38.72 93.75 L38.39 93.96 L38.06 94.17 L37.72 94.37 L37.39 94.58 L37.04 94.79 L36.64 95.03 L36.22 95.30 L35.81 95.58 L35.40 95.87 L35.00 96.16 L34.59 96.46 L34.19 96.76 L33.79 97.07 L33.39 97.38 L32.99 97.70 L32.60 98.02 L32.20 98.34 L31.81 98.66 L31.42 98.98 L31.02 99.30 L30.63 99.62 L30.25 99.94 L29.86 100.25 L29.48 100.56 L29.10 100.86 L28.72 101.15 L28.34 101.44 L27.97 101.72 L27.60 101.99 L27.24 102.25 L26.88 102.50 L26.53 102.73 L26.18 102.95 L25.84 103.16 L25.51 103.36 L25.19 103.54 L24.87 103.70 L24.57 103.85 L24.27 103.98 L23.99 104.09 L23.73 104.19 L23.47 104.27 L23.24 104.33 L23.02 104.38 L22.83 104.41 L22.66 104.42 L22.47 104.43 L22.24 104.42 L21.97 104.39 L21.67 104.35 L21.35 104.29 L20.99 104.21 L20.62 104.11 L20.23 103.99 L19.83 103.86 L19.42 103.71 L18.99 103.55 L18.56 103.38 L18.12 103.19 L17.68 103.00 L17.24 102.79 L16.79 102.58 L16.35 102.36 L15.92 102.14 L15.49 101.91 L15.06 101.68 M15.06 102.03 L15.46 101.83 L15.86 101.63 L16.27 101.42 L16.68 101.21 L17.10 100.99 L17.51 100.76 L17.92 100.53 L18.34 100.30 L18.75 100.06 L19.15 99.81 L19.56 99.56 L19.96 99.30 L20.35 99.04 L20.74 98.77 L21.12 98.49 L21.49 98.21 L21.86 97.92 L22.21 97.63 L22.53 97.35 L22.85 97.06 L23.17 96.76 L23.48 96.46 L23.80 96.15 L24.11 95.84 L24.43 95.52 L24.74 95.19 L25.05 94.86 L25.36 94.52 L25.67 94.18 L25.98 93.84 L26.28 93.49 L26.59 93.13 L26.89 92.78 L27.19 92.42 L27.49 92.05 L27.79 91.69 L28.09 91.32 L28.38 90.95 L28.68 90.58 L28.97 90.21 L29.25 89.84 L29.54 89.47 L29.82 89.10 L30.10 88.73 L30.37 88.37 L30.65 88.00 L30.92 87.63 L31.18 87.27 L31.44 86.91 L31.70 86.56 L31.95 86.20 L32.20 85.85 L32.45 85.51 L32.69 85.17 L32.92 84.83 L33.15 84.50 L33.38 84.17 L33.60 83.85 L33.84 83.50 L34.07 83.14 L34.29 82.78 L34.51 82.43 L34.72 82.07 L34.92 81.71 L35.11 81.36 L35.30 81.01 L35.48 80.66 L35.66 80.31 L35.83 79.97 L36.00 79.62 L36.16 79.29 L36.31 78.95 L36.46 78.62 L36.61 78.29 L36.76 77.97 L36.90 77.65 L37.04 77.34 L37.17 77.03 L37.31 76.73 L37.44 76.43 L37.57 76.15 L37.70 75.86 L37.82 75.59 L37.95 75.32 L38.07 75.06 L38.20 74.80 L38.32 74.56 L38.44 74.32 L38.56 74.10 L38.68 73.88 L38.80 73.67 L38.92 73.47 L39.04 73.28 L39.15 73.10 L39.27 72.93 L39.38 72.77 L39.50 72.62 L39.62 72.47 L39.76 72.31 L39.91 72.13 L40.06 71.97 L40.20 71.80 L40.35 71.65 L40.50 71.49 L40.65 71.34 L40.80 71.19 L40.95 71.05 L41.10 70.91 L41.25 70.78 L41.40 70.65 L41.55 70.52 L41.69 70.40 L41.84 70.28 L41.99 70.17 L42.14 70.06 L42.29 69.95 L42.44 69.85 L42.59 69.75 L42.73 69.65 L42.88 69.56 L43.03 69.47 L43.18 69.39 L43.33 69.31 L43.48 69.23 L43.63 69.15 L43.78 69.08 L43.93 69.01 L44.08 68.94 L44.23 68.88 L44.38 68.82 L44.53 68.76 L44.68 68.71 L44.83 68.66 L44.98 68.61 L45.14 68.56 L45.29 68.52 L45.45 68.48 L45.59 68.45 L45.73 68.42 L45.87 68.39 L46.01 68.37 L46.16 68.35 L46.32 68.33 L46.48 68.32 L46.65 68.31 L46.82 68.30 L47.00 68.29 L47.18 68.29 L47.37 68.29 L47.55 68.30 L47.75 68.30 L47.94 68.32 L48.14 68.33 L48.34 68.35 L48.54 68.37 L48.74 68.39 L48.94 68.42 L49.15 68.45 L49.35 68.48 L49.56 68.52 L49.76 68.56 L49.97 68.60 L50.17 68.64 L50.37 68.69 L50.57 68.73 L50.77 68.78 L50.97 68.84 L51.17 68.89 L51.36 68.95 L51.55 69.00 L51.73 69.06 L51.92 69.12 L52.09 69.18 L52.27 69.25 L52.44 69.31 L52.60 69.37 L52.76 69.44 L52.91 69.50 L53.03 69.55 L53.14 69.61 L53.25 69.66 L53.35 69.72 L53.45 69.77 L53.55 69.83 L53.64 69.90 L53.74 69.96 L53.83 70.03 L53.93 70.10 L54.03 70.18 L54.12 70.25 L54.22 70.34 L54.32 70.43 L54.43 70.52 L54.53 70.62 L54.64 70.72 L54.75 70.83 L54.86 70.94 L54.98 71.06 L55.10 71.18 L55.22 71.31 L55.35 71.45 L55.48 71.59 L55.61 71.73 L55.75 71.88 L55.89 72.04 L56.04 72.19 L56.19 72.36 L56.35 72.53 L56.51 72.70 L56.68 72.87 L56.86 73.05 L57.04 73.23 L57.22 73.42 L57.42 73.61 L57.61 73.80 L57.82 73.99 L58.03 74.18 L58.24 74.37 L58.42 74.53 L58.60 74.70 L58.79 74.87 L58.98 75.05 L59.18 75.23 L59.38 75.43 L59.58 75.63 L59.80 75.83 L60.01 76.04 L60.23 76.26 L60.45 76.48 L60.68 76.71 L60.91 76.93 L61.14 77.17 L61.38 77.40 L61.62 77.64 L61.86 77.87 L62.11 78.11 L62.35 78.36 L62.60 78.60 L62.86 78.84 L63.11 79.08 L63.37 79.33 L63.63 79.57 L63.89 79.81 L64.15 80.05 L64.42 80.28 L64.68 80.52 L64.95 80.75 L65.22 80.98 L65.50 81.21 L65.77 81.43 L66.05 81.65 L66.33 81.86 L66.61 82.07 L66.90 82.28 L67.19 82.48 L67.48 82.68 L67.77 82.86 L68.07 83.04 L68.34 83.20 L68.61 83.36 L68.89 83.51 L69.16 83.65 L69.43 83.80 L69.70 83.93 L69.98 84.07 L70.25 84.20 L70.53 84.33 L70.80 84.45 L71.08 84.57 L71.35 84.68 L71.63 84.79 L71.91 84.90 L72.18 85.00 L72.46 85.10 L72.74 85.20 L73.02 85.29 L73.29 85.38 L73.57 85.46 L73.85 85.54 L74.13 85.62 L74.41 85.69 L74.69 85.76 L74.97 85.83 L75.25 85.89 L75.53 85.95 L75.81 86.00 L76.09 86.06 L76.36 86.10 L76.64 86.15 L76.92 86.19 L77.20 86.23 L77.48 86.26 L77.76 86.29 L78.04 86.32 L78.32 86.35 L78.60 86.37 L78.87 86.39 L79.15 86.40 L79.43 86.41 L79.71 86.42 L79.99 86.43 L80.27 86.43 L80.56 86.43 L80.84 86.42 L81.13 86.42 L81.41 86.41 L81.70 86.39 L81.99 86.38 L82.28 86.36 L82.58 86.33 L82.87 86.31 L83.16 86.28 L83.45 86.24 L83.75 86.20 L84.04 86.16 L84.33 86.12 L84.63 86.07 L84.92 86.01 L85.22 85.96 L85.51 85.90 L85.80 85.83 L86.10 85.76 L86.39 85.69 L86.68 85.61 L86.97 85.52 L87.26 85.44 L87.55 85.34 L87.84 85.24 L88.13 85.14 L88.41 85.03 L88.70 84.92 L88.98 84.80 L89.26 84.68 L89.54 84.55 L89.82 84.41 L90.09 84.27 L90.36 84.12 L90.63 83.97 L90.89 83.81 L91.15 83.65 L91.41 83.48 L91.66 83.31 L91.91 83.13 L92.15 82.95 L92.40 82.76 L92.64 82.57 L92.88 82.38 L93.11 82.18 L93.34 81.98 L93.57 81.77 L93.80 81.56 L94.02 81.35 L94.24 81.13 L94.46 80.91 L94.68 80.69 L94.89 80.46 L95.10 80.23 L95.31 80.00 L95.51 79.76 L95.71 79.52 L95.90 79.28 L96.10 79.04 L96.29 78.79 L96.47 78.55 L96.66 78.29 L96.84 78.04 L97.01 77.79 L97.19 77.53 L97.36 77.27 L97.52 77.01 L97.68 76.75 L97.84 76.49 L97.99 76.22 L98.14 75.95 L98.29 75.68 L98.43 75.41 L98.56 75.14 L98.70 74.87 L98.82 74.60 L98.95 74.32 L99.07 74.04 L99.18 73.76 L99.30 73.47 L99.41 73.19 L99.51 72.90 L99.62 72.60 L99.71 72.31 L99.81 72.01 L99.90 71.72 L99.99 71.42 L100.07 71.11 L100.16 70.81 L100.23 70.51 L100.31 70.20 L100.38 69.89 L100.44 69.58 L100.51 69.27 L100.56 68.96 L100.62 68.64 L100.67 68.33 L100.72 68.01 L100.76 67.70 L100.80 67.38 L100.84 67.06 L100.87 66.74 L100.90 66.43 L100.92 66.11 L100.94 65.79 L100.95 65.47 L100.96 65.15 L100.97 64.83 L100.97 64.51 L100.97 64.19 L100.96 63.87 L100.95 63.55 L100.93 63.23 L100.91 62.91 L100.88 62.60 L100.85 62.29 L100.81 61.98 L100.78 61.67 L100.73 61.36 L100.69 61.04 L100.63 60.73 L100.58 60.41 L100.52 60.09 L100.46 59.78 L100.39 59.46 L100.32 59.14 L100.24 58.82 L100.16 58.50 L100.08 58.17 L99.99 57.85 L99.90 57.53 L99.81 57.21 L99.71 56.89 L99.60 56.57 L99.49 56.25 L99.38 55.93 L99.26 55.62 L99.14 55.30 L99.01 54.99 L98.88 54.67 L98.75 54.36 L98.61 54.05 L98.47 53.74 L98.32 53.43 L98.16 53.13 L98.00 52.83 L97.84 52.53 L97.67 52.23 L97.50 51.93 L97.32 51.64 L97.13 51.35 L96.94 51.07 L96.75 50.79 L96.54 50.51 L96.34 50.24 L96.13 49.97 L95.91 49.71 L95.69 49.45 L95.46 49.19 L95.23 48.94 L94.99 48.69 L94.75 48.45 L94.51 48.21 L94.26 47.97 L94.01 47.74 L93.75 47.51 L93.49 47.28 L93.23 47.06 L92.96 46.84 L92.69 46.63 L92.42 46.41 L92.14 46.21 L91.86 46.00 L91.58 45.80 L91.29 45.60 L91.01 45.41 L90.72 45.22 L90.43 45.03 L90.13 44.85 L89.84 44.67 L89.54 44.49 L89.25 44.32 L88.95 44.16 L88.65 43.99 L88.34 43.83 L88.04 43.68 L87.74 43.53 L87.43 43.38 L87.13 43.24 L86.82 43.10 L86.52 42.97 L86.21 42.84 L85.90 42.72 L85.59 42.60 L85.28 42.48 L84.95 42.37 L84.61 42.26 L84.27 42.16 L83.93 42.06 L83.59 41.97 L83.25 41.89 L82.91 41.82 L82.57 41.75 L82.22 41.68 L81.88 41.62 L81.54 41.57 L81.19 41.52 L80.85 41.47 L80.51 41.43 L80.17 41.40 L79.83 41.36 L79.49 41.33 L79.15 41.31 L78.81 41.29 L78.48 41.27 L78.14 41.25 L77.81 41.24 L77.48 41.23 L77.16 41.22 L76.83 41.21 L76.51 41.21 L76.19 41.21 L75.88 41.21 L75.57 41.21 L75.26 41.22 L74.96 41.22 L74.66 41.23 L74.36 41.24 L74.07 41.24 L73.79 41.25 L73.51 41.26 L73.24 41.27 L72.97 41.29 L72.71 41.30 L72.44 41.31 L72.14 41.33 L71.82 41.35 L71.50 41.38 L71.18 41.42 L70.87 41.46 L70.55 41.50 L70.24 41.55 L69.92 41.61 L69.61 41.66 L69.30 41.72 L68.99 41.79 L68.69 41.85 M69.02 41.99 L69.14 41.62 L69.27 41.25 L69.40 40.89 L69.53 40.52 L69.67 40.16 L69.80 39.81 L69.94 39.46 L70.07 39.12 L70.21 38.79 L70.35 38.47 L70.48 38.17 L70.62 37.89 L70.75 37.62 L70.88 37.37 L71.00 37.15 L71.11 36.95 L71.22 36.78 L71.33 36.63 L71.45 36.45 L71.60 36.26 L71.74 36.06 L71.89 35.87 L72.04 35.68 L72.20 35.49 L72.36 35.30 L72.52 35.12 L72.68 34.93 L72.85 34.75 L73.01 34.58 L73.18 34.40 L73.35 34.23 L73.53 34.06 L73.70 33.89 L73.88 33.73 L74.06 33.56 L74.24 33.41 L74.42 33.25 L74.60 33.10 L74.79 32.96 L74.97 32.82 L75.15 32.68 L75.34 32.55 L75.53 32.42 L75.71 32.29 L75.90 32.18 L76.09 32.06 L76.27 31.95 L76.46 31.85 L76.65 31.75 L76.83 31.65 L77.02 31.56 L77.20 31.48 L77.38 31.40 L77.56 31.32 L77.74 31.25 L77.92 31.19 L78.10 31.13 L78.28 31.08 L78.46 31.03 L78.64 30.99 L78.83 30.94 L79.02 30.91 L79.21 30.87 L79.41 30.84 L79.60 30.82 L79.81 30.79 L80.01 30.78 L80.22 30.76 L80.43 30.75 L80.65 30.74 L80.87 30.74 L81.09 30.74 L81.32 30.75 L81.55 30.76 L81.78 30.77 L82.02 30.79 L82.26 30.81 L82.50 30.83 L82.75 30.86 L83.00 30.89 L83.26 30.93 L83.52 30.97 L83.78 31.01 L84.04 31.06 L84.31 31.11 L84.59 31.16 L84.86 31.22 L85.14 31.28 L85.42 31.34 L85.71 31.41 L85.99 31.48 L86.28 31.55 L86.58 31.63 L86.88 31.71 L87.18 31.79 L87.48 31.88 L87.78 31.97 L88.08 32.06 L88.36 32.14 L88.63 32.23 L88.92 32.33 L89.21 32.44 L89.52 32.56 L89.82 32.69 L90.14 32.82 L90.46 32.96 L90.79 33.11 L91.13 33.26 L91.47 33.42 L91.81 33.58 L92.16 33.75 L92.52 33.93 L92.87 34.11 L93.24 34.29 L93.60 34.48 L93.97 34.67 L94.34 34.86 L94.71 35.05 L95.08 35.25 L95.46 35.45 L95.83 35.64 L96.21 35.84 L96.59 36.04 L96.97 36.24 L97.35 36.44 L97.74 36.64 L98.12 36.83 L98.50 37.03 L98.88 37.22 L99.27 37.41 L99.65 37.59 L100.03 37.78 L100.41 37.96 L100.80 38.13 L101.18 38.30 L101.56 38.47 L101.94 38.63 L102.31 38.78 L102.66 38.92 L103.00 39.05 L103.35 39.18 L103.69 39.32 L104.03 39.45 L104.37 39.58 L104.71 39.71 L105.05 39.84 L105.39 39.97 L105.73 40.10 L106.07 40.22 L106.41 40.35 L106.75 40.47 L107.09 40.59 L107.42 40.71 L107.76 40.83 L108.10 40.95 L108.43 41.06 L108.77 41.18 L109.11 41.29 L109.44 41.39 L109.77 41.50 L110.11 41.60 L110.44 41.70 L110.77 41.80 L111.11 41.90 L111.44 41.99 L111.77 42.08 L112.10 42.17 L112.43 42.25 L112.75 42.33 L113.08 42.41 L113.41 42.48 L113.74 42.55 L114.06 42.61 L114.39 42.68 L114.71 42.73 L115.04 42.79 L115.36 42.83 L115.69 42.88 L116.01 42.92 L116.34 42.95 L116.66 42.98 L116.99 43.01 L117.31 43.03 L117.63 43.05 L117.95 43.06 L118.27 43.06 L118.58 43.07 L118.90 43.07 L119.21 43.06 L119.52 43.05 L119.82 43.04 L120.13 43.03 L120.43 43.01 L120.73 42.99 L121.03 42.96 L121.32 42.93 L121.61 42.90 L121.90 42.87 L122.18 42.83 L122.47 42.79 L122.74 42.75 L123.02 42.70 L123.29 42.65 L123.56 42.60 L123.82 42.55 L124.08 42.50 L124.34 42.44 L124.59 42.38 L124.84 42.33 L125.09 42.26 L125.33 42.20 L125.57 42.13 L125.80 42.07 L126.03 42.00 L126.25 41.93 L126.47 41.86 L126.69 41.78 L126.90 41.71 L127.13 41.62 L127.35 41.53 L127.57 41.44 L127.79 41.34 L128.00 41.24 L128.21 41.14 L128.42 41.03 L128.62 40.91 L128.82 40.79 L129.02 40.67 L129.21 40.55 L129.40 40.42 L129.59 40.28 L129.77 40.14 L129.94 40.00 L130.12 39.86 L130.29 39.71 L130.45 39.55 L130.61 39.40 L130.76 39.23 L130.91 39.07 L131.06 38.90 L131.20 38.73 L131.33 38.56 L131.46 38.38 L131.59 38.20 L131.71 38.01 L131.82 37.82 L131.93 37.63 L132.03 37.44 L132.13 37.25 L132.22 37.05 L132.31 36.85 L132.38 36.65 L132.46 36.45 L132.53 36.24 L132.59 36.04 L132.64 35.83 L132.69 35.62 L132.74 35.41 L132.78 35.20 L132.81 34.98 L132.84 34.76 L132.86 34.55 L132.87 34.33 L132.88 34.11 L132.88 33.89 L132.88 33.68 L132.87 33.46 L132.85 33.24 L132.83 33.03 L132.80 32.81 L132.77 32.60 L132.74 32.38 L132.70 32.17 L132.65 31.96 L132.60 31.75 L132.55 31.53 L132.49 31.32 L132.42 31.11 L132.35 30.90 L132.28 30.69 L132.20 30.49 L132.12 30.28 L132.04 30.07 L131.95 29.86 L131.85 29.66 L131.75 29.45 L131.65 29.25 L131.54 29.05 L131.43 28.84 L131.32 28.64 L131.20 28.44 L131.08 28.24 L130.95 28.04 L130.82 27.84 L130.68 27.64 L130.54 27.45 L130.40 27.25 L130.25 27.05 L130.09 26.84 L129.92 26.63 L129.74 26.43 L129.56 26.22 L129.38 26.02 L129.19 25.82 L129.00 25.62 L128.81 25.42 L128.61 25.22 L128.41 25.02 L128.21 24.83 L128.00 24.63 L127.79 24.43 L127.58 24.24 L127.36 24.05 L127.14 23.85 L126.92 23.66 L126.70 23.47 L126.48 23.28 L126.26 23.09 L126.03 22.90 L125.81 22.71 L125.58 22.53 L125.36 22.34 L125.13 22.16 L124.91 21.98 L124.68 21.80 L124.46 21.62 L124.24 21.44 L124.02 21.27 L123.80 21.09 L123.58 20.92 L123.37 20.76 L123.15 20.59 L122.95 20.43 L122.74 20.27 L122.54 20.11 L122.34 19.96 L122.15 19.81 L121.95 19.66 L121.74 19.50 L121.52 19.33 L121.29 19.17 L121.06 19.00 " fill="none" stroke="#d6f0a0" stroke-width="1.2" stroke-dasharray="5.5 3"/>
    <polygon points="111.3,2.4 192.0,24.2 186.7,44.0 106.4,22.2" fill="rgba(255,255,255,0.2)" stroke="#d8d8e0" stroke-width="1"/>
    <polygon points="11.6,69.7 62.7,51.9 68.1,71.2 17.0,88.2" fill="rgba(255,255,255,0.2)" stroke="#d8d8e0" stroke-width="1"/>
    <g fill="#fff" stroke="#98bb66" stroke-width="1.3" stroke-linejoin="round">
      <path d="M34 127.5 L51 135 L38 146"/>
      <path d="M47 138.5 C56 126 66 116 79.5 111 C70 121 60 131 54 138.5 Z"/>
      <path d="M47 132.5 C62 136 76 141 90 146.5 C76 147 62 144 52 140 Z"/>
      <ellipse cx="25.5" cy="124" rx="9.5" ry="6.5" transform="rotate(22 25.5 124)"/>
      <ellipse cx="25.5" cy="124" rx="5.8" ry="3.4" transform="rotate(22 25.5 124)"/>
      <ellipse cx="29.5" cy="150.5" rx="9.5" ry="6.5" transform="rotate(-38 29.5 150.5)"/>
      <ellipse cx="29.5" cy="150.5" rx="5.8" ry="3.4" transform="rotate(-38 29.5 150.5)"/>
    </g>
    <text x="23.5" y="204.3" font-family="Liberation Sans" font-weight="bold" font-size="28" fill="#82b13a" textLength="148.5" lengthAdjust="spacingAndGlyphs">#OERcamp</text>
  </svg>
  <!--/LOGO-->
  <div class="md" id="p2a" style="letter-spacing:0.80px;top:721.3px;font-size:32px;line-height:48px">In dieser Session tauchst du ein in die Welt der 5V-</div>
  <div class="md" id="p2b" style="letter-spacing:0.86px;top:768.8px;font-size:32px;line-height:48px">Freiheiten von Open Content und lernst gleichzeitig</div>
  <div class="md" id="p2c" style="letter-spacing:0.89px;top:816.3px;font-size:32px;line-height:48px">die Markdown-Sprache kennen – dein perfektes</div>
  <div class="md" id="p2d" style="letter-spacing:0.71px;top:863.8px;font-size:32px;line-height:48px">Werkzeug, um diese Freiheiten zu nutzen!</div>
  <div class="md" id="h2" style="letter-spacing:-0.82px;top:959.5px;font-size:48px;line-height:60px;font-weight:bold">BottomUp MarkDown:</div>
  <div style="position:absolute;left:40px;top:1032px;width:781px;height:2px;background:#eeeeee"></div>
  <div style="position:absolute;left:16px;top:925px;width:40px;height:78.7px;background:#e6e6e6;border-radius:0 6px 6px 0"></div>
  <svg style="position:absolute;left:16px;top:925px" width="40" height="78"><g fill="#8a8a8a"><rect x="8" y="28.1" width="24.2" height="3.7"/><rect x="8" y="36" width="24.2" height="3.8"/><rect x="8" y="44" width="24.2" height="3.8"/></g></svg>
</div>
</body></html>
